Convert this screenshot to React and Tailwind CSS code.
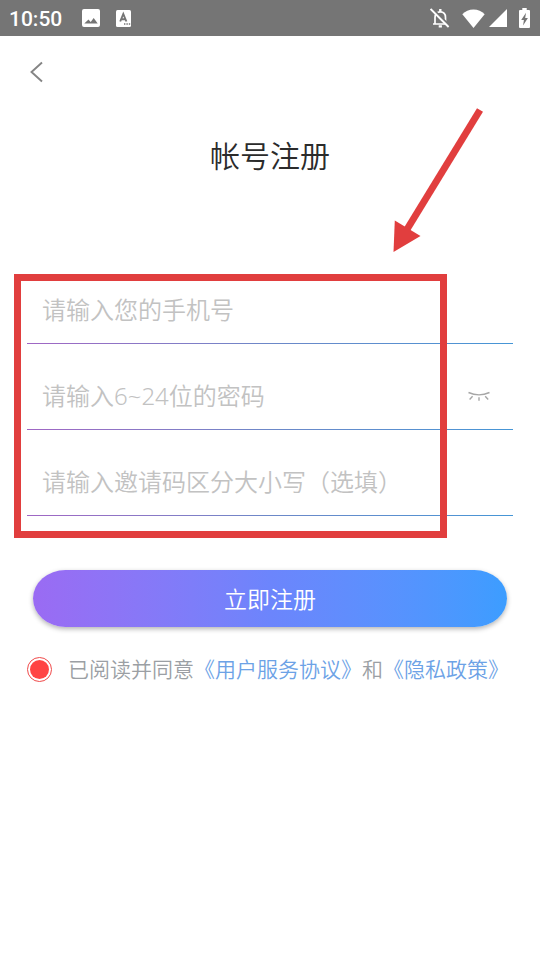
import React, { useState } from 'react';

const StatusBar = () => (
  <div className="flex h-9 items-center justify-between bg-[#757575] pl-[9px] pr-[10px] text-white">
    <div className="flex items-center">
      <span className="pt-px font-['Roboto',sans-serif] text-[21px] font-medium leading-9">10:50</span>
      <svg className="ml-5 size-[18px]" viewBox="0 0 18 18" fill="currentColor">
        <path
          fillRule="evenodd"
          d="M2 0h14a2 2 0 012 2v14a2 2 0 01-2 2H2a2 2 0 01-2-2V2a2 2 0 012-2zm.3 14.500h13.400l-4-5.500-3 4-2.200-2.500z"
        />
      </svg>
      <svg className="ml-4 h-[17px] w-[15px]" viewBox="0 0 15 17">
        <rect width="15" height="17" rx="1.500" fill="currentColor" />
        <path d="M4.200 11.500L7.300 4l3.100 7.500M5.200 9.200h4.200" fill="none" stroke="#757575" strokeWidth="1.900" />
        <path d="M8 14h1.400M10.400 14h1.400M12.800 14h1.400" stroke="#757575" strokeWidth="1.300" />
      </svg>
    </div>
    <div className="flex items-center">
      <svg className="mr-3 size-5" viewBox="0 0 20 20" fill="none" stroke="currentColor" strokeWidth="1.700">
        <path d="M5 16V9.500C5 6 7 3.800 10.300 3.800s5.200 2.200 5.200 5.700V16M3 16h14.500" />
        <path d="M10.300 1v3M8.700 18.400h3.200" strokeWidth="2.400" />
        <path d="M2 .2L20 18" stroke="#757575" strokeWidth="2" />
        <path d="M.6 1l18 18" strokeWidth="1.900" />
      </svg>
      <svg className="mr-1 h-[19px] w-[23px]" viewBox="0 0 23 19" fill="currentColor">
        <path d="M11.500 19L.3 5.300C3.300 2.300 7 .6 11.500.6s8.200 1.700 11.200 4.700z" />
      </svg>
      <svg className="mr-3 size-[18px]" viewBox="0 0 18 18" fill="currentColor">
        <path d="M18 0v18H0z" />
      </svg>
      <svg className="h-5 w-[11px]" viewBox="0 0 11 20">
        <path
          d="M3.300 0h4.400v2H10a1 1 0 011 1v16a1 1 0 01-1 1H1a1 1 0 01-1-1V3a1 1 0 011-1h2.300z"
          fill="currentColor"
        />
        <path d="M7 4.800L2.200 12h2.700l-.8 5.500L8.900 10H6.200z" fill="#757575" />
      </svg>
    </div>
  </div>
);

const ClosedEyeIcon = () => (
  <svg className="h-3 w-[22px]" viewBox="0 0 22 12" fill="none" stroke="#a6a6a6" strokeWidth="1.400">
    <path d="M.5 2.500Q11 7.300 21.500 2.500M4.600 6.300l-3 3.200M11 7.300v3.500M17.200 6.300l3 3.200" />
  </svg>
);

const fields = [
  { id: 'phone', type: 'tel', placeholder: '请输入您的手机号' },
  { id: 'password', type: 'password', placeholder: '请输入6~24位的密码' },
  { id: 'invite', type: 'text', placeholder: '请输入邀请码区分大小写（选填）' },
];

const App = () => {
  const [values, setValues] = useState({ phone: '', password: '', invite: '' });
  const [showPassword, setShowPassword] = useState(false);
  const [agreed, setAgreed] = useState(true);

  const handleChange = (id, value) => {
    setValues(prev => ({ ...prev, [id]: value }));
  };

  return (
    <div
      lang="zh-CN"
      className="relative min-h-screen bg-white font-['Noto_Sans','Noto_Sans_CJK_SC',sans-serif] font-[350]"
    >
      <StatusBar />

      {/* Header */}
      <header className="px-[27px] pt-6">
        <button type="button" aria-label="返回" className="block">
          <svg className="h-6 w-5" viewBox="0 0 20 24" fill="none" stroke="#858585" strokeWidth="1.900">
            <path d="M15 2.500L4.500 12 15 21.500" />
          </svg>
        </button>
        <h1 className="mt-12 text-center text-[30px] font-[350] leading-12 text-[#2b2b2b]">帐号注册</h1>
      </header>

      <form className="mt-[78px]" onSubmit={e => e.preventDefault()}>
        {/* Fields */}
        <div className="relative px-[27px]">
          {fields.map(field => (
            <div key={field.id} className="pt-[18px]">
              <div className="flex h-[67px] items-center pl-[15px] pr-[23px]">
                <input
                  id={field.id}
                  type={field.id === 'password' && showPassword ? 'text' : field.type}
                  aria-label={field.placeholder}
                  placeholder={field.placeholder}
                  value={values[field.id]}
                  onChange={e => handleChange(field.id, e.target.value)}
                  className="h-full min-w-0 flex-1 bg-transparent text-2xl text-[#2b2b2b] outline-none placeholder:text-[#c2c2c2]"
                />
                {field.id === 'password' && (
                  <button type="button" aria-label="显示密码" onClick={() => setShowPassword(!showPassword)}>
                    <ClosedEyeIcon />
                  </button>
                )}
              </div>
              <div className="h-px bg-linear-to-r from-[#a066c4] via-[#6c88c8] to-[#4596d6]" />
            </div>
          ))}
          <div className="pointer-events-none absolute -bottom-[22px] left-[14px] right-[93px] top-4 border-[7px] border-[#e13e3e]" />
        </div>

        {/* Submit */}
        <div className="mt-[54px] px-[33px]">
          <button
            type="submit"
            className="h-[57px] w-full rounded-[33px/29px] bg-linear-to-r from-[#9a6bf3] via-[#6c85fc] to-[#3c9dff] pt-0.5 text-[23px] text-white shadow-[0_2px_5px_rgba(0,0,0,0.3)]"
          >
            立即注册
          </button>
        </div>

        {/* Agreement */}
        <div className="mt-6 flex items-center gap-4 pl-[27px] text-[21px] leading-9 text-[#9b9fa4]">
          <input
            id="agree"
            type="checkbox"
            checked={agreed}
            onChange={e => setAgreed(e.target.checked)}
            className="size-[25px] shrink-0 appearance-none rounded-full border border-[#f04a4a] bg-clip-content p-[2px] checked:bg-[#ff4444]"
          />
          <label htmlFor="agree">
            已阅读并同意
            <a href="#terms" className="text-[#6ca2e6]">《用户服务协议》</a>
            和
            <a href="#privacy" className="text-[#6ca2e6]">《隐私政策》</a>
          </label>
        </div>
      </form>

      {/* Arrow pointing at the fields */}
      <svg
        className="pointer-events-none absolute right-14 top-[108px] h-[145px] w-[92px]"
        viewBox="0 0 92 145"
        fill="#e13e3e"
      >
        <path d="M88 2L14 123" stroke="#e13e3e" strokeWidth="7" />
        <path d="M1.500 144L2.800 112.500 28.500 128z" />
      </svg>
    </div>
  );
};

export default App;
